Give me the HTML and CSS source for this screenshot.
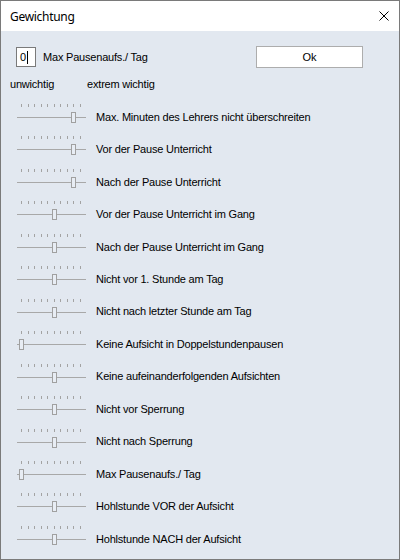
FILE: index.html
```html
<!DOCTYPE html>
<html lang="de">
<head>
  <meta charset="UTF-8">
  <title>Gewichtung</title>
  <link rel="stylesheet" href="styles.css">
</head>
<body>
  <div class="window">
    <div class="titlebar">
      <span class="title">Gewichtung</span>
      <svg class="close" width="10" height="10" viewBox="0 0 10 10">
        <path d="M0.5 0.5 L9.5 9.5 M9.5 0.5 L0.5 9.5" stroke="#000" stroke-width="1" fill="none"/>
      </svg>
    </div>

    <div class="content">
      <div class="top-row">
        <div class="num-box">0<span class="caret"></span></div>
        <span class="top-label">Max Pausenaufs./ Tag</span>
        <button class="ok">Ok</button>
      </div>

      <div class="scale">
        <span>unwichtig</span>
        <span class="scale-max">extrem wichtig</span>
      </div>

      <div id="rows"></div>
    </div>
  </div>

  <script>
    const weights = [
      ['Max. Minuten des Lehrers nicht überschreiten', 8],
      ['Vor der Pause Unterricht', 8],
      ['Nach der Pause Unterricht', 8],
      ['Vor der Pause Unterricht im Gang', 5],
      ['Nach der Pause Unterricht im Gang', 5],
      ['Nicht vor 1. Stunde am Tag', 5],
      ['Nicht nach letzter Stunde am Tag', 5],
      ['Keine Aufsicht in Doppelstundenpausen', 0],
      ['Keine aufeinanderfolgenden Aufsichten', 5],
      ['Nicht vor Sperrung', 5],
      ['Nicht nach Sperrung', 5],
      ['Max Pausenaufs./ Tag', 0],
      ['Hohlstunde VOR der Aufsicht', 5],
      ['Hohlstunde NACH der Aufsicht', 5]
    ];

    const rows = document.getElementById('rows');
    for (const [text, value] of weights) {
      let ticks = '';
      for (let i = 0; i < 10; i++) ticks += '<span></span>';
      // thumb centre sits on the tick for the value
      const left = Math.round(2 + value * 6.5);
      rows.innerHTML += `<div class="row">
        <div class="trackbar">
          <div class="ticks">${ticks}</div>
          <div class="track"><span class="thumb" style="left:${left}px"></span></div>
        </div>
        <span class="row-label">${text}</span>
      </div>`;
    }
  </script>
</body>
</html>
```

FILE: styles.css
```css
body {
  margin: 0;
  font-family: 'Liberation Sans', Arial, sans-serif;
  font-size: 11px;
  color: #000;
}

.window {
  width: 400px;
  height: 560px;
  box-sizing: border-box;
  border: 1px solid #7a7a7a;
  background: #e2e8f0;
  display: flex;
  flex-direction: column;
}

.titlebar {
  height: 30px;
  flex: none;
  background: #fff;
  display: flex;
  align-items: center;
  justify-content: space-between;
  padding: 0 10px 0 9px;
}

.title {
  font-family: 'Noto Sans', 'Open Sans', sans-serif;
  font-size: 12px;
  letter-spacing: -0.3px;
}

.content {
  padding: 15px 0 0 0;
}

.top-row {
  display: flex;
  align-items: center;
  height: 22px;
  padding-left: 15px;
}

.num-box {
  width: 20px;
  height: 20px;
  box-sizing: border-box;
  border: 1px solid #7a7a7a;
  background: #fff;
  display: flex;
  align-items: center;
  padding-left: 3px;
  letter-spacing: -0.2px;
}

.caret {
  width: 1px;
  height: 13px;
  background: #000;
  margin-left: 1px;
}

.top-label {
  margin-left: 7px;
  letter-spacing: -0.2px;
}

.ok {
  margin-left: auto;
  margin-right: 36px;
  width: 107px;
  height: 22px;
  border: 1px solid #adadad;
  background: #fff;
  font-family: 'Liberation Sans', Arial, sans-serif;
  font-size: 11px;
  padding: 0;
}

.scale {
  display: flex;
  padding: 10px 0 0 9px;
  height: 13px;
  line-height: 13px;
  letter-spacing: -0.2px;
}

.scale-max {
  margin-left: 33px;
}

#rows {
  margin-top: 10px;
}

.row {
  display: grid;
  grid-template-columns: 69px 1fr;
  column-gap: 10px;
  height: 32.46px;
  padding-left: 16px;
}

.ticks {
  display: flex;
  gap: 5.5px;
  height: 3px;
  margin: 3px 0 0 4px;
}

.ticks span {
  width: 1px;
  background: #a3a3a3;
}

.track {
  position: relative;
  height: 1px;
  margin-top: 10px;
  background: #a8a8a8;
}

.thumb {
  position: absolute;
  top: -5px;
  width: 5px;
  height: 11px;
  box-sizing: border-box;
  border: 1px solid #a0a0a0;
  background: #e8edf4;
}

.row-label {
  align-self: center;
  line-height: 13px;
  letter-spacing: -0.2px;
  white-space: nowrap;
}
```
